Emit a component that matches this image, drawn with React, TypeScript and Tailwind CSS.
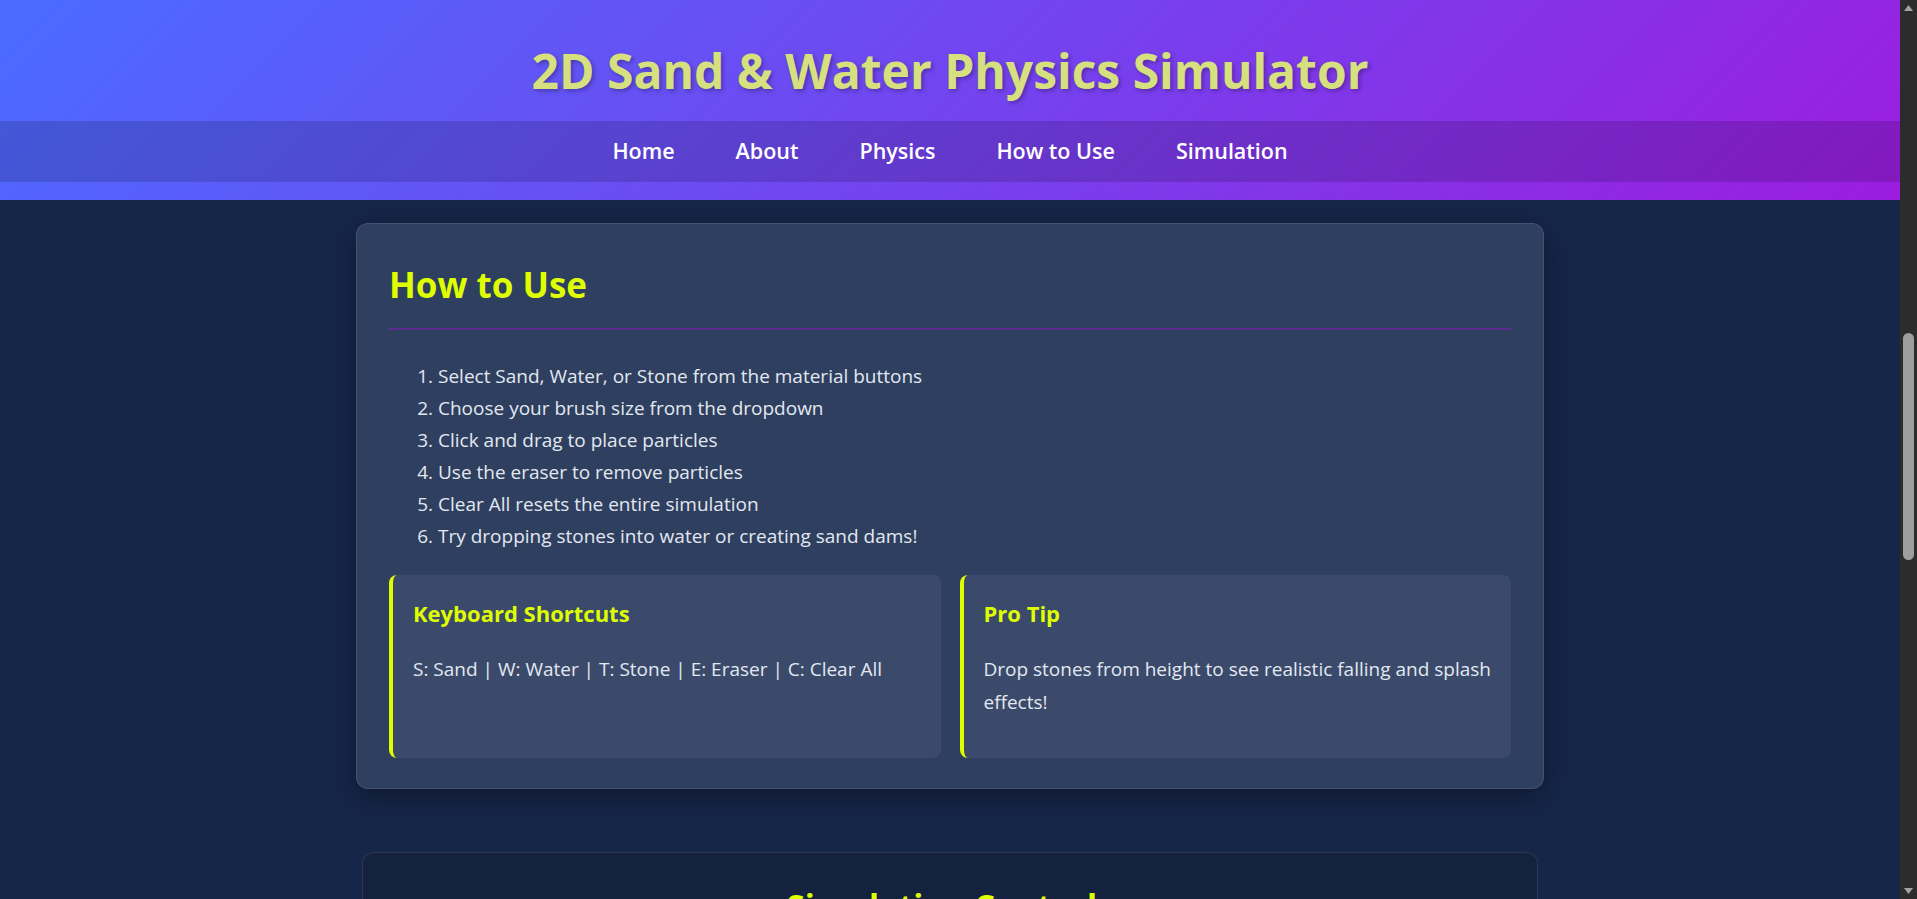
import { useState } from "react";

const navLinks = ["Home", "About", "Physics", "How to Use", "Simulation"];

const steps = [
    "Select Sand, Water, or Stone from the material buttons",
    "Choose your brush size from the dropdown",
    "Click and drag to place particles",
    "Use the eraser to remove particles",
    "Clear All resets the entire simulation",
    "Try dropping stones into water or creating sand dams!",
];

const materials = ["Sand", "Water", "Stone", "Eraser"];

function InfoBox({ title, children }: { title: string; children: React.ReactNode }) {
    return (
        <div className="h-[183px] rounded-lg border-l-4 border-[#dfff00] bg-[#3b4a6b] p-[20px]">
            <h3 className="mt-[5px] text-[22px] font-bold leading-[1.2] text-[#dfff00]">{title}</h3>
            <p className="mt-[27px] text-[19px] leading-[33px] text-[#e2e8f0]">{children}</p>
        </div>
    );
}

// classic window scrollbar look (the page itself scrolls in the left pane)
function ScrollStrip() {
    return (
        <div className="flex w-[17px] shrink-0 flex-col items-center bg-[#2c2c2c]">
            <svg width="9" height="6" viewBox="0 0 9 6" className="mt-[5px]">
                <path d="M4.5 0L9 6H0z" fill="#a3a3a3" />
            </svg>
            <div className="mt-[322px] h-[227px] w-[11px] rounded-full bg-[#9e9e9e]" />
            <div className="flex-1" />
            <svg width="9" height="6" viewBox="0 0 9 6" className="mb-[5px]">
                <path d="M0 0h9L4.5 6z" fill="#a3a3a3" />
            </svg>
        </div>
    );
}

export default function App() {
    const [material, setMaterial] = useState("Sand");

    return (
        <div className="flex h-screen bg-[#162649]" style={{ fontFamily: '"Open Sans", "Noto Sans", sans-serif' }}>
            <div className="min-w-0 flex-1 overflow-y-auto text-white">
                {/* Header */}
                <header className="bg-[linear-gradient(135deg,#4a6cff,#9b1de0)] pb-[18px]">
                    <div className="h-[121px] pt-[42px]">
                        <h1 className="text-center text-[48px] font-bold leading-[1.2] text-[#d6e07e] [text-shadow:2px_2px_4px_rgba(0,0,0,0.3)]">
                            2D Sand &amp; Water Physics Simulator
                        </h1>
                    </div>
                    <nav className="flex h-[61px] items-center justify-center gap-[61px] bg-black/15">
                        {navLinks.map((link) => (
                            <a key={link} href="#" className="text-[21.5px] font-semibold text-white">
                                {link}
                            </a>
                        ))}
                    </nav>
                </header>

                <main className="pt-[23px] pb-20">
                    {/* How to Use */}
                    <section className="mx-auto w-[1188px] rounded-xl border border-white/10 bg-[#2f3f5f] px-[32px] pt-[40px] pb-[30px] shadow-[0_8px_30px_rgba(0,0,0,0.35)]">
                        <h2 className="border-b-2 border-[#5b2d91] pb-[22px] text-[35px] font-bold leading-[1.2] text-[#dfff00]">
                            How to Use
                        </h2>
                        <ol className="mt-[30px] list-decimal pl-[49px] text-[19px] leading-[32px] text-[#e2e8f0]">
                            {steps.map((step) => (
                                <li key={step}>{step}</li>
                            ))}
                        </ol>
                        <div className="mt-[23px] grid grid-cols-2 gap-[19px]">
                            <InfoBox title="Keyboard Shortcuts">
                                S: Sand | W: Water | T: Stone | E: Eraser | C: Clear All
                            </InfoBox>
                            <InfoBox title="Pro Tip">
                                Drop stones from height to see realistic falling and splash effects!
                            </InfoBox>
                        </div>
                    </section>

                    {/* Simulation Controls */}
                    <section className="mx-auto mt-[63px] w-[1176px] rounded-xl border border-white/10 bg-[#14213f] px-[32px] pt-[33px] pb-[32px]">
                        <h2 className="text-center text-[33px] font-bold leading-[1.2] text-[#dfff00]">
                            Simulation Controls
                        </h2>
                        <div className="mt-6 flex justify-center gap-3">
                            {materials.map((m) => (
                                <button
                                    key={m}
                                    onClick={() => setMaterial(m)}
                                    className={`rounded-lg px-5 py-2 text-[16px] font-semibold ${material === m ? "bg-[#dfff00] text-[#14213f]" : "bg-[#2f3f5f] text-white"}`}
                                >
                                    {m}
                                </button>
                            ))}
                            <button className="rounded-lg bg-[#9b1de0] px-5 py-2 text-[16px] font-semibold text-white">
                                Clear All
                            </button>
                        </div>
                        <div className="mx-auto mt-6 h-[500px] w-[800px] rounded-lg border border-white/10 bg-black/40" />
                    </section>
                </main>
            </div>
            <ScrollStrip />
        </div>
    );
}
